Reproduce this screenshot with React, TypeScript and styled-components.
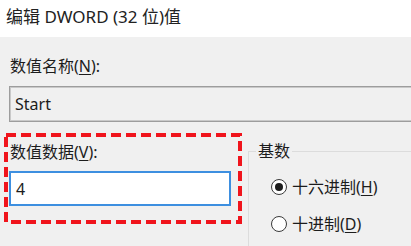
import React from "react";
import styled, { createGlobalStyle } from "styled-components";

const Global = createGlobalStyle`
  html, body { margin: 0; padding: 0; background: #f0f0f0; }
  body { font-family: "Noto Sans", "Noto Sans CJK SC", sans-serif; color: #1c1c1c; }
`;

const Window = styled.div`
  width: 411px;
  height: 246px;
  overflow: hidden;
  background: #f0f0f0;
  display: flex;
  flex-direction: column;
`;

const TitleBar = styled.div`
  height: 37px;
  flex: none;
  box-sizing: border-box;
  background: #ffffff;
  display: flex;
  align-items: center;
  padding: 0 0 4px 6px;
  font-size: 17px;
  line-height: 18px;
  color: #222;
  white-space: nowrap;
`;

const Body = styled.div`
  padding: 0 0 0 9px;
  display: flex;
  flex-direction: column;
`;

const Label = styled.div<{ $top: number }>`
  margin-top: ${(p) => p.$top}px;
  font-size: 16px;
  line-height: 18px;
  padding-left: 1px;
  color: #1c1c1c;
  white-space: nowrap;
  u { text-underline-offset: 2px; }
`;

const NameField = styled.div`
  margin-top: 11px;
  width: 420px;
  height: 36px;
  box-sizing: border-box;
  border: 1px solid #9d9d9d;
  box-shadow: inset 0 0 0 1px #c9c9c9;
  background: #f0f0f0;
  padding-left: 5px;
  display: flex;
  align-items: center;
  font-size: 16px;
  color: #1c1c1c;
`;

const Lower = styled.div`
  margin-top: 21px;
  display: flex;
  align-items: flex-start;
`;

const DataSection = styled.div`
  position: relative;
  flex: none;
  width: 222px;
  display: flex;
  flex-direction: column;
`;

const DataField = styled.div`
  margin-top: 10px;
  height: 35px;
  box-sizing: border-box;
  border: 2px solid #3d8fe0;
  background: #ffffff;
  padding-left: 5px;
  display: flex;
  align-items: center;
  font-size: 16px;
  color: #1c1c1c;
`;

const Highlight = styled.svg`
  position: absolute;
  left: -5px;
  top: -10px;
  width: 238px;
  height: 91px;
  overflow: visible;
  pointer-events: none;
`;

const BaseGroup = styled.fieldset`
  flex: none;
  margin: -1px 0 0 17px;
  padding: 0 0 40px 0;
  width: 200px;
  border: 1px solid #dcdcdc;
  border-right: none;
  border-bottom: none;
  display: flex;
  flex-direction: column;
`;

const Legend = styled.legend`
  margin-left: 7px;
  padding: 0 2px;
  font-size: 16px;
  line-height: 18px;
  color: #1c1c1c;
`;

const RadioRow = styled.label<{ $top: number }>`
  margin-top: ${(p) => p.$top}px;
  padding-left: 22px;
  display: flex;
  align-items: center;
  gap: 5px;
  font-size: 16px;
  line-height: 18px;
  color: #1c1c1c;
  white-space: nowrap;
  u { text-underline-offset: 2px; }
`;

const RadioCircle = styled.span<{ $checked?: boolean }>`
  width: 16px;
  height: 16px;
  box-sizing: border-box;
  border-radius: 50%;
  border: 1.5px solid #3a3a3a;
  background: #ffffff;
  display: flex;
  align-items: center;
  justify-content: center;
  flex: none;
  &::after {
    content: "";
    width: 8px;
    height: 8px;
    border-radius: 50%;
    background: ${(p) => (p.$checked ? "#1c1c1c" : "transparent")};
  }
`;

export default function App() {
  return (
    <>
      <Global />
      <Window>
        <TitleBar>编辑 DWORD (32 位)值</TitleBar>
        <Body>
          <Label $top={20}>
            数值名称(<u>N</u>):
          </Label>
          <NameField>Start</NameField>
          <Lower>
            <DataSection>
              <Label $top={0}>
                数值数据(<u>V</u>):
              </Label>
              <DataField>4</DataField>
              <Highlight viewBox="0 0 238 91">
                <rect
                  x="2"
                  y="2"
                  width="234"
                  height="87"
                  fill="none"
                  stroke="#f0141c"
                  strokeWidth="4"
                  strokeDasharray="10 5"
                />
              </Highlight>
            </DataSection>
            <BaseGroup>
              <Legend>基数</Legend>
              <RadioRow $top={18}>
                <RadioCircle $checked />
                <span>
                  十六进制(<u>H</u>)
                </span>
              </RadioRow>
              <RadioRow $top={19}>
                <RadioCircle />
                <span>
                  十进制(<u>D</u>)
                </span>
              </RadioRow>
            </BaseGroup>
          </Lower>
        </Body>
      </Window>
    </>
  );
}
